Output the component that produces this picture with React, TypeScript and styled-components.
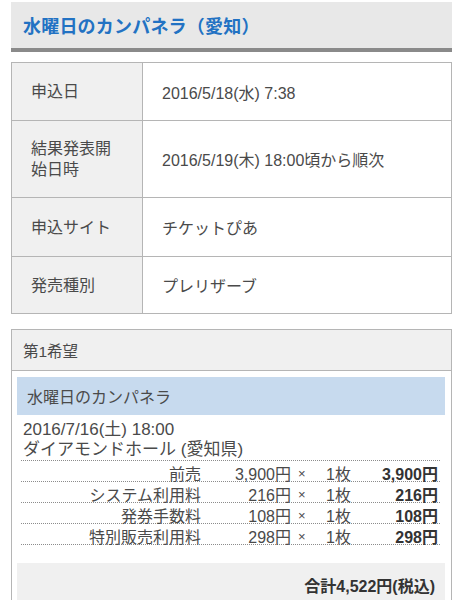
import React from "react";
import styled, { createGlobalStyle } from "styled-components";

const Global = createGlobalStyle`
  html, body { margin: 0; padding: 0; background: #fff; }
  body {
    font-family: "Liberation Sans", "Noto Sans CJK JP", sans-serif;
    color: #444;
    -webkit-font-smoothing: antialiased;
  }
`;

const Page = styled.div`
  padding: 2px 10px 0 11px;
  display: flex;
  flex-direction: column;
`;

const Header = styled.div`
  height: 46px;
  background: #e8e8e8;
  border-bottom: 4px solid #8a8a8a;
  display: flex;
  align-items: center;
  padding-left: 12px;
`;

const Title = styled.h1`
  margin: 0;
  font-size: 18px;
  font-weight: bold;
  color: #2272c3;
  letter-spacing: 0.2px;
`;

const InfoTable = styled.div`
  margin-top: 10px;
  border: 1px solid #b5b5b5;
  display: flex;
  flex-direction: column;
`;

const InfoRow = styled.div<{ $h: number }>`
  display: grid;
  grid-template-columns: 131px 1fr;
  min-height: ${(p) => p.$h}px;
  & + & { border-top: 1px solid #b5b5b5; }
`;

const Label = styled.div`
  background: #f0f0f0;
  border-right: 1px solid #b5b5b5;
  padding: 0 20px 0 19px;
  display: flex;
  align-items: center;
  font-size: 16px;
  line-height: 21px;
  color: #4a4a4a;
`;

const Value = styled.div`
  padding-left: 19px;
  display: flex;
  align-items: center;
  font-size: 16px;
  color: #4a4a4a;
`;

const Card = styled.div`
  margin-top: 15px;
  border: 1px solid #b5b5b5;
  border-bottom: none;
  display: flex;
  flex-direction: column;
`;

const CardHead = styled.div`
  height: 40px;
  background: #f0f0f0;
  border-bottom: 1px solid #b5b5b5;
  display: flex;
  align-items: center;
  padding-left: 11px;
  font-size: 15.5px;
  color: #4a4a4a;
`;

const CardBody = styled.div`
  padding: 6px 6px 0 5px;
  display: flex;
  flex-direction: column;
`;

const EventBar = styled.div`
  height: 38px;
  background: #c7daee;
  display: flex;
  align-items: center;
  padding-left: 10px;
  font-size: 16px;
  color: #4a4a4a;
`;

const Detail = styled.div`
  padding: 5px 0 0 6px;
  font-size: 17px;
  line-height: 20px;
  color: #4a4a4a;
`;

const Items = styled.div`
  margin: 0 5px 0 4px;
  border-bottom: 1px dotted #8c8c8c;
`;

const ItemRow = styled.div`
  display: grid;
  grid-template-columns: 180px 90px 28px 52px 1fr;
  height: 20px;
  align-items: center;
  border-top: 1px dotted #8c8c8c;
  font-size: 16px;
  color: #4a4a4a;
  white-space: nowrap;
`;

const Cell = styled.div<{ $align?: "left" | "right"; $bold?: boolean; $pl?: number; $pr?: number }>`
  text-align: ${(p) => p.$align ?? "left"};
  font-weight: ${(p) => (p.$bold ? "bold" : "normal")};
  color: ${(p) => (p.$bold ? "#333" : "#4a4a4a")};
  padding-left: ${(p) => p.$pl ?? 0}px;
  padding-right: ${(p) => p.$pr ?? 0}px;
`;

const Times = styled.span`
  font-size: 13px;
`;

const Total = styled.div`
  margin-top: 18px;
  background: #f0f0f0;
  height: 44px;
  display: flex;
  align-items: center;
  justify-content: flex-end;
  padding: 0 10px 0 0;
  font-size: 16px;
  font-weight: bold;
  color: #333;
`;

const info: { label: React.ReactNode; value: string; h: number }[] = [
  { label: "申込日", value: "2016/5/18(水) 7:38", h: 57 },
  { label: "結果発表開始日時", value: "2016/5/19(木) 18:00頃から順次", h: 76 },
  { label: "申込サイト", value: "チケットぴあ", h: 58 },
  { label: "発売種別", value: "プレリザーブ", h: 56 },
];

const items = [
  { name: "前売", price: "3,900円", qty: "1枚", amount: "3,900円" },
  { name: "システム利用料", price: "216円", qty: "1枚", amount: "216円" },
  { name: "発券手数料", price: "108円", qty: "1枚", amount: "108円" },
  { name: "特別販売利用料", price: "298円", qty: "1枚", amount: "298円" },
];

export default function App() {
  return (
    <>
      <Global />
      <Page>
        <Header>
          <Title>水曜日のカンパネラ（愛知）</Title>
        </Header>
        <InfoTable>
          {info.map((r, i) => (
            <InfoRow key={i} $h={r.h}>
              <Label>{r.label}</Label>
              <Value>{r.value}</Value>
            </InfoRow>
          ))}
        </InfoTable>
        <Card>
          <CardHead>第1希望</CardHead>
          <CardBody>
            <EventBar>水曜日のカンパネラ</EventBar>
            <Detail>
              2016/7/16(土) 18:00
              <br />
              ダイアモンドホール (愛知県)
            </Detail>
            <Items>
              {items.map((it, i) => (
                <ItemRow key={i}>
                  <Cell $align="right">{it.name}</Cell>
                  <Cell $align="right">{it.price}</Cell>
                  <Cell $pl={7}>
                    <Times>×</Times>
                  </Cell>
                  <Cell $pl={7}>{it.qty}</Cell>
                  <Cell $align="right" $bold $pr={2}>
                    {it.amount}
                  </Cell>
                </ItemRow>
              ))}
            </Items>
            <Total>合計4,522円(税込)</Total>
          </CardBody>
        </Card>
      </Page>
    </>
  );
}
